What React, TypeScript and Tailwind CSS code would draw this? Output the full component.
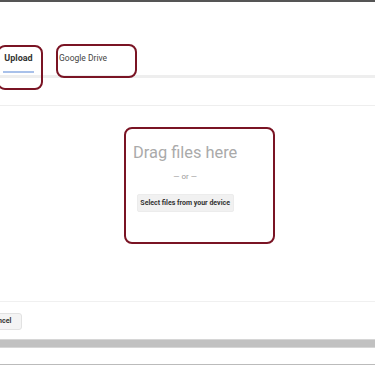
export default function App() {
  return (
    <div className="relative w-[375px] h-[366px] bg-white overflow-hidden font-['Roboto',sans-serif]">
      <div className="h-[2px] bg-[#555555]" />

      {/* Tabs */}
      <div className="mt-[46px] flex items-stretch h-[30px] border-b-[3px] border-[#eeeeee]">
        <div className="ml-[3px] w-[31px] flex flex-col items-center pt-[5px]">
          <span className="text-[9px] leading-[11px] font-bold text-[#333333]">Upload</span>
          <div className="mt-auto mb-[2px] h-[2px] w-full bg-[#a9c1ea]" />
        </div>
        <div className="ml-[25px] flex flex-col pt-[5px]">
          <span className="text-[8.5px] leading-[11px] text-[#444444]">Google Drive</span>
        </div>
      </div>

      <div className="mt-[27px] h-px bg-[#eeeeee]" />

      {/* Drop zone */}
      <div className="mt-[21px] ml-[124px] w-[151px] h-[117px] border-2 border-[#7a1424] rounded-[8px] pt-[12px]">
        <div className="ml-[7px] inline-flex flex-col items-center">
          <span className="text-[16.4px] leading-[20px] text-[#aaaaaa]">Drag files here</span>
          <span className="mt-[9px] text-[8px] leading-[10px] text-[#999999]">— or —</span>
          <button className="mt-[12px] h-[18px] w-[97px] bg-[#f1f1f1] border border-[#ececec] rounded-[2px] text-[7px] font-bold text-[#333333]">
            Select files from your device
          </button>
        </div>
      </div>

      <div className="mt-[57px] h-px bg-[#f0f0f0]" />

      {/* Footer */}
      <button className="mt-[11px] -ml-[21px] w-[43px] h-[17px] border border-[#e2e2e2] bg-[#f4f4f4] rounded-[3px] text-[7px] font-bold text-[#333333] block">
        Cancel
      </button>

      <div className="mt-[9px] h-[9px] bg-[#c1c1c1] border-y border-[#d6d6d6]" />
      <div className="mt-[16px] h-px bg-[#bbbbbb]" />

      {/* Annotation outlines */}
      <div className="absolute left-[-3px] top-[45px] w-[46px] h-[45px] border-2 border-[#7a1424] rounded-[8px]" />
      <div className="absolute left-[56px] top-[44px] w-[81px] h-[34px] border-2 border-[#7a1424] rounded-[8px]" />
    </div>
  );
}
